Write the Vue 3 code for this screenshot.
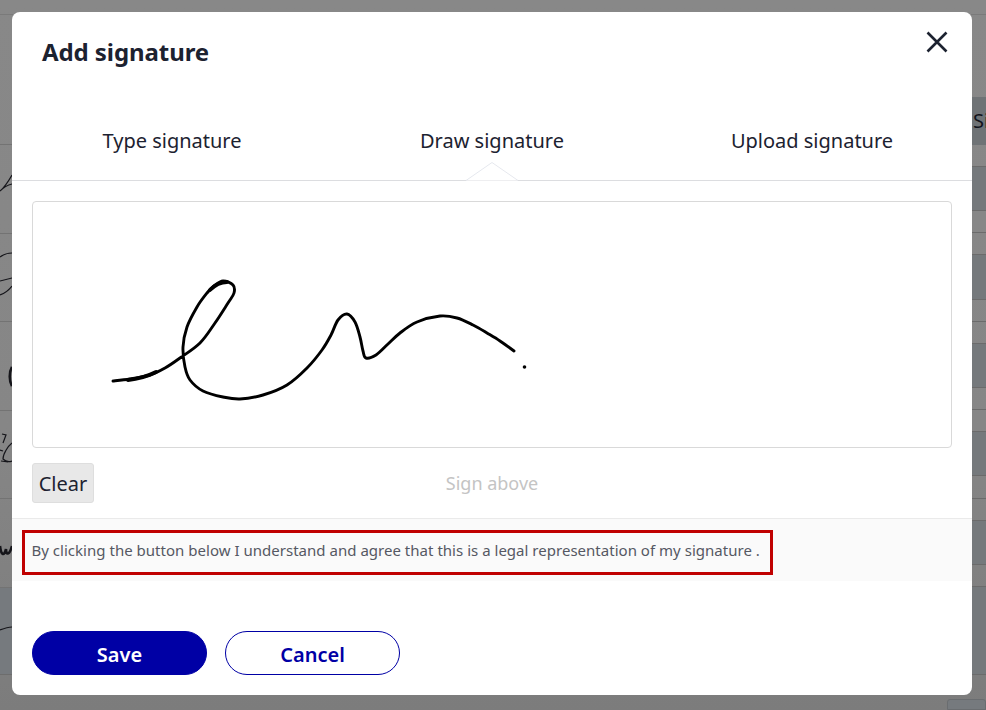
<script setup>
const stroke = [
  [113,381],[130,379],[150,375],[165,368],[180,358],[200,343],[215,323],[228,303],[234,293],[233,285],[223,281],[214,286],[207,293],[197,307],[187,327],[183,347],[185,367],[190,380],[203,391],[223,397],[240,399],[263,395],[287,385],[307,368],[322,350],[331,335],[338,320],[347,314],[355,322],[360,337],[363,351],[366,358],[376,355],[388,344],[400,333],[417,322],[440,316],[457,318],[473,325],[487,333],[500,341],[514,351]
]
function smooth(p) {
  let d = `M${p[0][0]} ${p[0][1]}`
  for (let i = 0; i < p.length - 1; i++) {
    const a = p[Math.max(i - 1, 0)], b = p[i], c = p[i + 1], e = p[Math.min(i + 2, p.length - 1)]
    const c1 = [b[0] + (c[0] - a[0]) / 6, b[1] + (c[1] - a[1]) / 6]
    const c2 = [c[0] - (e[0] - b[0]) / 6, c[1] - (e[1] - b[1]) / 6]
    d += ` C${c1[0].toFixed(1)} ${c1[1].toFixed(1)} ${c2[0].toFixed(1)} ${c2[1].toFixed(1)} ${c[0]} ${c[1]}`
  }
  return d
}
const signature = smooth(stroke)
const leftRows = [0, 1, 2, 3, 4, 5]
const rightRows = [0, 1, 2, 3, 4]
</script>

<template>
  <div class="page">
    <div class="backdrop">
      <div class="top-line"></div>
      <div class="left-rows">
        <div v-for="r in leftRows" :key="r" class="left-row" :class="{ dark: r === 5 }"></div>
      </div>
      <svg class="scribbles" width="12" height="560" viewBox="0 150 12 560">
        <path d="M0 191 C5 187 8 182 12 175 M0 191 C4 187 8 185 12 184" />
        <path d="M0 257 C4 254 8 253 12 253 M0 281 C4 280 8 279 12 278 M0 295 C5 293 9 290 12 286" />
        <path class="thick" d="M12 367 C9 372 9 381 12 386" />
        <path d="M2 434 L6 435 L3 443 M0 450 L3 451 M12 443 C8 446 3 454 3 459 C6 462 9 462 12 461 M1 461 L8 462" />
        <path class="thick" d="M0 546 C1 555 4 557 6 549 C6 555 9 556 12 546" />
        <path d="M0 630 C5 628 9 627 12 627" />
      </svg>
      <div class="right-head">Si</div>
      <div class="right-rows">
        <div v-for="r in rightRows" :key="r" class="right-row">
          <div class="cell"></div><div class="cell tint"></div><div class="cell"></div>
        </div>
        <div class="right-last"></div>
      </div>
      <div class="corner-btn"></div>
    </div>

    <div class="modal">
      <header class="head">
        <h2 class="title">Add signature</h2>
        <svg class="close" width="24" height="24" viewBox="0 0 24 24">
          <path d="M2.5 2.5 L21.5 21.5 M21.5 2.5 L2.5 21.5" />
        </svg>
      </header>
      <nav class="tabs">
        <div class="tab">Type signature</div>
        <div class="tab">Draw signature</div>
        <div class="tab">Upload signature</div>
        <svg class="notch" width="52" height="19" viewBox="0 0 52 19">
          <path class="notch-fill" d="M0 18.5 L26 0.5 L52 18.5" />
        </svg>
      </nav>
      <section class="body">
        <div class="canvas">
          <svg class="sig" width="918" height="244" viewBox="33 202 918 244">
            <path class="ink" :d="signature" />
            <path class="ink heavy" d="M128 380 C138 379 148 376 156 372" />
            <path class="ink heavy2" d="M210 290 C215 285 220 282 227 282" />
            <circle cx="524.5" cy="367" r="1.8" />
          </svg>
        </div>
        <div class="tools">
          <button class="clear">Clear</button>
          <span class="hint">Sign above</span>
        </div>
      </section>
      <div class="agree">
        <div class="agree-box">By clicking the button below I understand and agree that this is a legal representation of my signature .</div>
      </div>
      <footer class="foot">
        <button class="btn save">Save</button>
        <button class="btn cancel">Cancel</button>
      </footer>
    </div>
  </div>
</template>

<style>
html, body { margin: 0; background: #868686; }
</style>

<style scoped>
.page {
  position: relative;
  width: 986px;
  height: 710px;
  overflow: hidden;
  box-sizing: border-box;
  padding: 12px 14px 15px 12px;
  font-family: "Noto Sans", sans-serif;
  color: #1c2230;
}
.backdrop { position: absolute; inset: 0; background: linear-gradient(#888888, #868686 60%, #7c7c7c); }
.top-line { position: absolute; left: 0; right: 0; top: 14px; height: 1px; background: #7a7a7a; }
.left-rows { position: absolute; left: 0; top: 144px; width: 12px; }
.left-row { height: 88.5px; box-sizing: border-box; border-top: 1px solid #737373; }
.left-row.dark { background: #767a7e; border-bottom: 1px solid #6d6d6d; }
.scribbles { position: absolute; left: 0; top: 150px; }
.scribbles path { fill: none; stroke: #15151a; stroke-width: 1.2; }
.scribbles path.thick { stroke-width: 2.6; }
.right-head {
  position: absolute; left: 972px; top: 97px; width: 14px; height: 48px;
  background: #6f7376; color: #11131c; font-size: 20px; line-height: 48px; padding-left: 1px; box-sizing: border-box; overflow: hidden;
}
.right-rows { position: absolute; left: 972px; top: 145px; width: 14px; }
.right-row { height: 88.4px; }
.cell { height: 22.1px; box-sizing: border-box; border-bottom: 1px solid #6b6b6b; }
.cell.tint { height: 44.2px; background: #75797c; }
.right-last { height: 88px; background: #75797c; border-bottom: 1px solid #6b6b6b; box-sizing: border-box; }
.corner-btn {
  position: absolute; left: 947px; top: 699px; width: 39px; height: 11px; box-sizing: border-box;
  background: #767a7e; border: 1px solid #6a6d70; border-radius: 3px 3px 0 0;
}

.modal {
  position: relative;
  width: 960px;
  height: 683px;
  background: #fff;
  border-radius: 8px;
  display: flex;
  flex-direction: column;
}
.head {
  height: 80px;
  display: flex;
  justify-content: space-between;
  box-sizing: border-box;
  padding: 21px 23px 0 30px;
}
.title { margin: 0; font-size: 24px; line-height: 38px; font-weight: 700; color: #1c2230; letter-spacing: -0.08px; }
.close { margin-top: -3px; }
.close path { fill: none; stroke: #1c2230; stroke-width: 2.6; }
.tabs {
  position: relative;
  height: 89px;
  display: grid;
  grid-template-columns: repeat(3, 320px);
  border-bottom: 1px solid #dcdde0;
  box-sizing: border-box;
}
.tab { text-align: center; font-size: 20px; line-height: 28px; padding-top: 35px; }
.notch { position: absolute; left: 454px; bottom: -1px; }
.notch-fill { fill: #fff; stroke: #e6e8ee; stroke-width: 1; }
.body { padding: 20px 20px 0; height: 337px; box-sizing: border-box; }
.canvas {
  height: 247px;
  box-sizing: border-box;
  border: 1px solid #d9d9d9;
  border-radius: 4px;
  background: #fff;
}
.sig { display: block; }
.ink { fill: none; stroke: #000; stroke-width: 2.9; stroke-linecap: round; stroke-linejoin: round; }
.heavy { stroke-width: 3.8; }
.heavy2 { stroke-width: 3.8; }
.tools { position: relative; margin-top: 15px; display: flex; align-items: flex-start; }
.clear {
  width: 62px; height: 40px; padding: 2px 0 0;
  background: #e8e8e8; border: 1px solid #dedede; border-radius: 3px;
  font: 20px/36px "Noto Sans", sans-serif; color: #1c2230;
  box-sizing: border-box;
}
.hint {
  position: absolute; left: 0; right: 0; top: 0; text-align: center;
  font-size: 18px; line-height: 40px; color: #c4c4c4;
}
.agree {
  height: 63px;
  box-sizing: border-box;
  background: #fafafa;
  border-top: 1px solid #eaeaea;
  padding: 11px 0 0 10px;
}
.agree-box {
  width: 751px; height: 45px; box-sizing: border-box;
  border: 3px solid #c00000;
  padding-left: 6.5px;
  font-size: 15px; line-height: 34px; color: #555863; white-space: nowrap;
  letter-spacing: 0.02px;
}
.foot { padding: 50px 20px 0; display: flex; gap: 18px; }
.btn {
  width: 175px; height: 44px; padding: 3px 0 0; border-radius: 22px;
  font: 600 20px/37px "Noto Sans", sans-serif;
  box-sizing: border-box;
}
.save { background: #0000a5; color: #fff; border: 1px solid #0000a5; }
.cancel { background: #fff; color: #0000a5; border: 1px solid #0000a5; }
</style>
